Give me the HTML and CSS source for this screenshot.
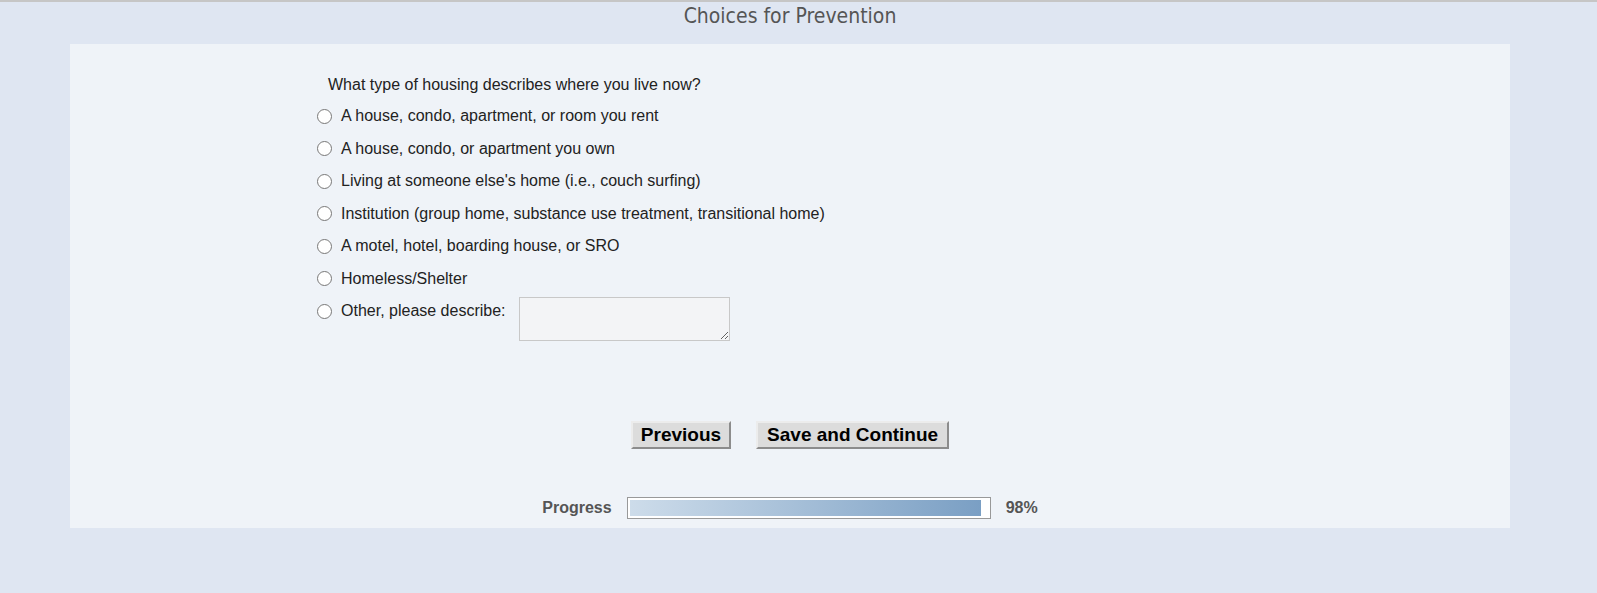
FILE: index.html
```html
<!DOCTYPE html>
<html>
<head>
  <title>Choices for Prevention</title>
  <link rel="stylesheet" href="styles.css">
</head>
<body>
  <div class="page">
    <h1 class="title">Choices for Prevention</h1>

    <div class="panel">
      <form class="survey" id="surveyForm">
        <p class="question">What type of housing describes where you live now?</p>

        <label class="choice"><input type="radio" name="housing" value="rent"><span>A house, condo, apartment, or room you rent</span></label>
        <label class="choice"><input type="radio" name="housing" value="own"><span>A house, condo, or apartment you own</span></label>
        <label class="choice"><input type="radio" name="housing" value="couch"><span>Living at someone else's home (i.e., couch surfing)</span></label>
        <label class="choice"><input type="radio" name="housing" value="institution"><span>Institution (group home, substance use treatment, transitional home)</span></label>
        <label class="choice"><input type="radio" name="housing" value="motel"><span>A motel, hotel, boarding house, or SRO</span></label>
        <label class="choice"><input type="radio" name="housing" value="homeless"><span>Homeless/Shelter</span></label>
        <div class="choice other">
          <label><input type="radio" name="housing" value="other"><span>Other, please describe:</span></label>
          <textarea name="otherText"></textarea>
        </div>
      </form>

      <div class="actions">
        <button type="button" class="btn-prev">Previous</button>
        <button type="submit" form="surveyForm">Save and Continue</button>
      </div>

      <div class="progress">
        <span class="progress-label">Progress</span>
        <div class="bar"><div class="fill" style="width: 98%"></div></div>
        <span class="progress-label">98%</span>
      </div>
    </div>
  </div>
</body>
</html>
```

FILE: styles.css
```css
body {
  margin: 0;
  padding: 0;
  font-family: "Liberation Sans", Arial, sans-serif;
  background-color: #dfe6f2;
  border-top: 2px solid #c6c6c6;
}
.page {
  width: 1580px;
}
.title {
  margin: 0;
  font-family: "DejaVu Sans Condensed", "DejaVu Sans", sans-serif;
  font-stretch: condensed;
  font-weight: normal;
  font-size: 21px;
  line-height: 28px;
  color: #555555;
  text-align: center;
}
.panel {
  margin: 14px 70px 0;
  padding: 25px 0 9px;
  background-color: #eff3f8;
}
.survey {
  width: 944px;
  margin: 0 auto;
  font-size: 16px;
  color: #222222;
}
.question {
  margin: 0;
  padding-left: 10px;
  line-height: 31px;
}
.choice {
  display: flex;
  align-items: center;
  height: 32.5px;
}
.choice input {
  width: 15px;
  height: 15px;
  margin: 0 9px 0 -1px;
}
.choice.other {
  align-items: flex-start;
  height: auto;
}
.choice.other label {
  display: flex;
  align-items: center;
  height: 32.5px;
}
.choice.other textarea {
  box-sizing: border-box;
  width: 211px;
  height: 44px;
  margin: 2px 0 0 13px;
  border: 1px solid #c8c8c8;
  background-color: #f3f4f6;
  font-family: inherit;
}
.actions {
  display: flex;
  justify-content: center;
  gap: 25px;
  margin-top: 80px;
}
.actions button {
  font-family: "Liberation Sans", Arial, sans-serif;
  font-weight: bold;
  font-size: 19px;
  line-height: 22px;
  padding: 1px 9px;
  color: #000000;
  background-color: #dcdcdc;
  border: 2px solid;
  border-color: #ececec #8c8c8c #8c8c8c #ececec;
  cursor: pointer;
}
.actions .btn-prev {
  padding: 1px 8px;
}
.progress {
  display: flex;
  justify-content: center;
  align-items: center;
  gap: 15px;
  margin-top: 48px;
}
.progress-label {
  font-size: 16px;
  font-weight: bold;
  color: #555555;
}
.bar {
  box-sizing: border-box;
  width: 364px;
  height: 22px;
  padding: 2px;
  border: 1px solid #999999;
  background-color: #ffffff;
}
.fill {
  height: 100%;
  background: linear-gradient(to right, #cddcea, #7a9fc4);
}
```
